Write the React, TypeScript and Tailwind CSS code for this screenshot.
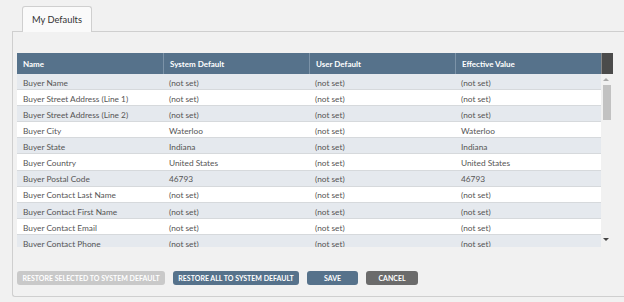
const rows: [string, string, string, string][] = [
  ['Buyer Name', '(not set)', '(not set)', '(not set)'],
  ['Buyer Street Address (Line 1)', '(not set)', '(not set)', '(not set)'],
  ['Buyer Street Address (Line 2)', '(not set)', '(not set)', '(not set)'],
  ['Buyer City', 'Waterloo', '(not set)', 'Waterloo'],
  ['Buyer State', 'Indiana', '(not set)', 'Indiana'],
  ['Buyer Country', 'United States', '(not set)', 'United States'],
  ['Buyer Postal Code', '46793', '(not set)', '46793'],
  ['Buyer Contact Last Name', '(not set)', '(not set)', '(not set)'],
  ['Buyer Contact First Name', '(not set)', '(not set)', '(not set)'],
  ['Buyer Contact Email', '(not set)', '(not set)', '(not set)'],
  ['Buyer Contact Phone', '(not set)', '(not set)', '(not set)'],
];

const headers = ['Name', 'System Default', 'User Default', 'Effective Value'];

export default function App() {
  return (
    <div className="h-[302px] w-[624px] overflow-hidden bg-[#f1f1f1] pl-[12px] pt-[6px] font-['Lato',sans-serif]">
      <div className="relative z-10 -mb-px ml-[10px] flex h-[26px] w-[70px] items-center justify-center rounded-t-[3px] border border-b-0 border-[#cfcfcf] bg-[#fafafa] pt-[1px] text-[9.3px] text-[#333]">
        My Defaults
      </div>
      <div className="h-[266px] rounded-bl-[3px] border-b border-l border-t border-[#cfcfcf] bg-[#f1f1f1] pl-[4px] pt-[21px]">
        <div className="flex h-[21px] w-[596px]">
          {headers.map((h, i) => (
            <div
              key={h}
              className={`flex w-[146px] items-center bg-[#56728b] pl-[6px] pt-[1px] text-[8px] font-bold text-white ${i > 0 ? 'border-l border-[#7c93a8]' : ''}`}
            >
              {h}
            </div>
          ))}
          <div className="w-[12px] border-l border-[#888] bg-[#4b4b4b]" />
        </div>
        <div className="flex h-[173px] w-[596px]">
          <div className="w-[584px] overflow-hidden">
            {rows.map((r, i) => (
              <div
                key={r[0]}
                className={`flex h-[16.1px] items-center border-b border-[#d6d9dc] pt-[3px] text-[8.3px] text-[#555] ${i % 2 === 0 ? 'bg-[#e5e9ee]' : 'bg-white'}`}
              >
                {r.map((c, j) => (
                  <div key={j} className="w-[146px] shrink-0 pl-[6px]">
                    {c}
                  </div>
                ))}
              </div>
            ))}
          </div>
          <div className="relative w-[12px]">
            <div className="absolute left-[2px] top-[4px] h-0 w-0 border-x-[3px] border-b-[3px] border-x-transparent border-b-[#aaa]" />
            <div className="absolute left-[2px] top-[11px] h-[35px] w-[8px] bg-[#c2c2c2]" />
            <div className="absolute bottom-[6px] left-[2px] h-0 w-0 border-x-[3px] border-t-[3px] border-x-transparent border-t-[#444]" />
          </div>
        </div>
        <div className="mt-[24px] flex gap-[8px] text-[7px] font-bold text-white">
          <button className="h-[14px] w-[148px] rounded-[3px] bg-[#c9c9c9] uppercase">Restore selected to system default</button>
          <button className="h-[14px] w-[126px] rounded-[3px] bg-[#56728b] uppercase">Restore all to system default</button>
          <button className="h-[14px] w-[51px] rounded-[3px] bg-[#56728b] uppercase">Save</button>
          <button className="h-[14px] w-[52px] rounded-[3px] bg-[#6b6b6b] uppercase">Cancel</button>
        </div>
      </div>
    </div>
  );
}
